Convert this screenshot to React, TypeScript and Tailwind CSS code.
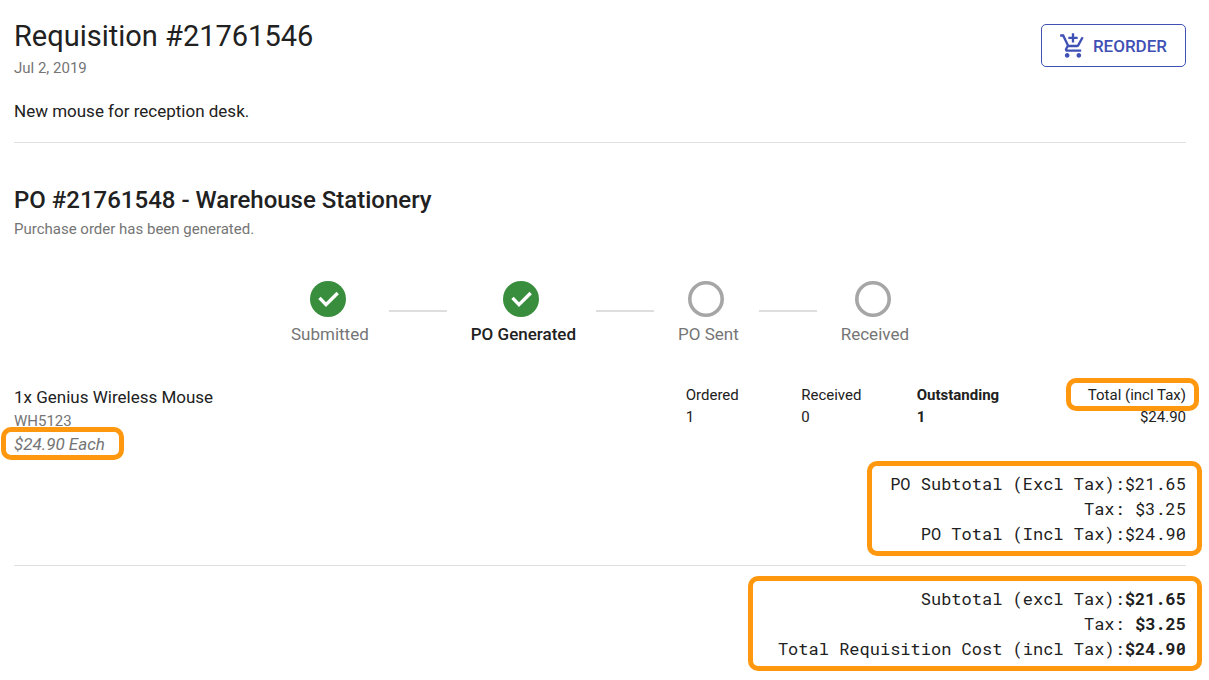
import type { ReactNode } from "react";
import { clsx } from "clsx";
import { MdAddShoppingCart } from "react-icons/md";

interface Step {
  label: string;
  done: boolean;
  active?: boolean;
}

interface CostLine {
  label: string;
  amount: string;
}

const steps: Step[] = [
  { label: "Submitted", done: true },
  { label: "PO Generated", done: true, active: true },
  { label: "PO Sent", done: false },
  { label: "Received", done: false },
];

const orderTotals: CostLine[] = [
  { label: "PO Subtotal (Excl Tax):", amount: "$21.65" },
  { label: "Tax: ", amount: "$3.25" },
  { label: "PO Total (Incl Tax):", amount: "$24.90" },
];

const requisitionTotals: CostLine[] = [
  { label: "Subtotal (excl Tax):", amount: "$21.65" },
  { label: "Tax: ", amount: "$3.25" },
  { label: "Total Requisition Cost (incl Tax):", amount: "$24.90" },
];

// Orange callout drawn around its children without taking up any space
function Highlight({ children, className }: { children: ReactNode; className: string }) {
  return (
    <div className="relative w-fit">
      {children}
      <span
        aria-hidden="true"
        className={clsx("pointer-events-none absolute rounded-[10px] border-5 border-[#ff980e]", className)}
      />
    </div>
  );
}

function StepIcon({ done }: { done: boolean }) {
  return (
    <svg viewBox="0 0 36 36" fill="none" className="mr-1 size-9" aria-hidden="true">
      {done ? (
        <>
          <circle cx="18" cy="18" r="18" fill="#388e3c" />
          <path d="M9.5 16.9 L16 23.6 L27.7 12" stroke="#fff" strokeWidth="3.4" />
        </>
      ) : (
        <circle cx="18" cy="18" r="16.2" stroke="#a6a6a6" strokeWidth="3.6" />
      )}
    </svg>
  );
}

function Stepper() {
  return (
    <ol className="mt-[42px] flex justify-center">
      {steps.map((step, index) => (
        <li key={step.label} className="flex items-start">
          {index > 0 && <span className="mt-[29px] mr-6 ml-5 h-0.5 w-[58px] bg-[#dedede]" />}
          <div className="flex flex-col items-center">
            <StepIcon done={step.done} />
            <span
              className={clsx(
                "mt-[5px] text-[17px] leading-6",
                step.active ? "font-medium text-[#212121]" : "text-[#757575]"
              )}
            >
              {step.label}
            </span>
          </div>
        </li>
      ))}
    </ol>
  );
}

function CostSummary({ lines, bold }: { lines: CostLine[]; bold?: boolean }) {
  return (
    <div className="text-right font-['Roboto_Mono','Liberation_Mono',monospace] text-[17px] leading-[25px] whitespace-pre">
      {lines.map((line) => (
        <p key={line.label}>
          {line.label}
          <span className={clsx(bold && "font-bold")}>{line.amount}</span>
        </p>
      ))}
    </div>
  );
}

export default function App() {
  return (
    <main className="bg-white pt-4 pr-[23px] pb-4 pl-[14px] font-['Roboto',sans-serif] text-[#212121]">
      {/* Header */}
      <header className="flex items-start justify-between border-b border-[#e0e0e0] pb-[18px]">
        <div>
          <h1 className="text-[29px] leading-10">Requisition #21761546</h1>
          <p className="mt-0.5 text-[15px] leading-5 text-[#757575]">Jul 2, 2019</p>
          <p className="mt-5 text-[17px] leading-[26px]">New mouse for reception desk.</p>
        </div>
        <button
          type="button"
          className="mt-2 flex h-[43px] items-center gap-1.5 rounded-[5px] border border-[#3f51b5] pr-[18px] pl-[17px] text-[17px] font-medium text-[#3f51b5]"
        >
          <MdAddShoppingCart className="size-7" />
          <span className="pt-0.5">REORDER</span>
        </button>
      </header>

      {/* Purchase order */}
      <section className="border-b border-[#e0e0e0] pb-[19px]">
        <h2 className="mt-[41px] text-[24px] leading-8 font-medium">PO #21761548 - Warehouse Stationery</h2>
        <p className="mt-[3px] text-[15px] leading-5 text-[#757575]">Purchase order has been generated.</p>

        <Stepper />

        <div className="mt-[38px] grid grid-cols-[4fr_3fr]">
          <div>
            <p className="text-[17px] leading-[26px]">1x Genius Wireless Mouse</p>
            <p className="text-[15px] leading-[22px] text-[#757575]">WH5123</p>
            <Highlight className="-top-[5px] -right-[19px] -bottom-1 -left-[13px]">
              <p className="text-[17px] leading-6 text-[#757575] italic">$24.90 Each</p>
            </Highlight>
          </div>
          <table className="w-full self-start text-left text-[15px] leading-[22px]">
            <thead>
              <tr>
                <th className="w-[23%] pl-0.5 font-normal">Ordered</th>
                <th className="w-[23%] pl-0.5 font-normal">Received</th>
                <th className="pl-0.5 font-bold">Outstanding</th>
                <th className="font-normal">
                  <div className="flex justify-end">
                    <Highlight className="-top-1.5 -right-[13px] -bottom-[5px] -left-[22px]">Total (incl Tax)</Highlight>
                  </div>
                </th>
              </tr>
            </thead>
            <tbody>
              <tr>
                <td className="pl-0.5">1</td>
                <td className="pl-0.5">0</td>
                <td className="pl-0.5 font-bold">1</td>
                <td className="text-right">$24.90</td>
              </tr>
            </tbody>
          </table>
        </div>

        <div className="mt-[15px] flex justify-end">
          <Highlight className="-inset-y-[10px] -right-4 -left-[23px]">
            <CostSummary lines={orderTotals} />
          </Highlight>
        </div>
      </section>

      <div className="mt-5 flex justify-end">
        <Highlight className="-inset-y-[10px] -right-4 -left-[30px]">
          <CostSummary lines={requisitionTotals} bold />
        </Highlight>
      </div>
    </main>
  );
}
